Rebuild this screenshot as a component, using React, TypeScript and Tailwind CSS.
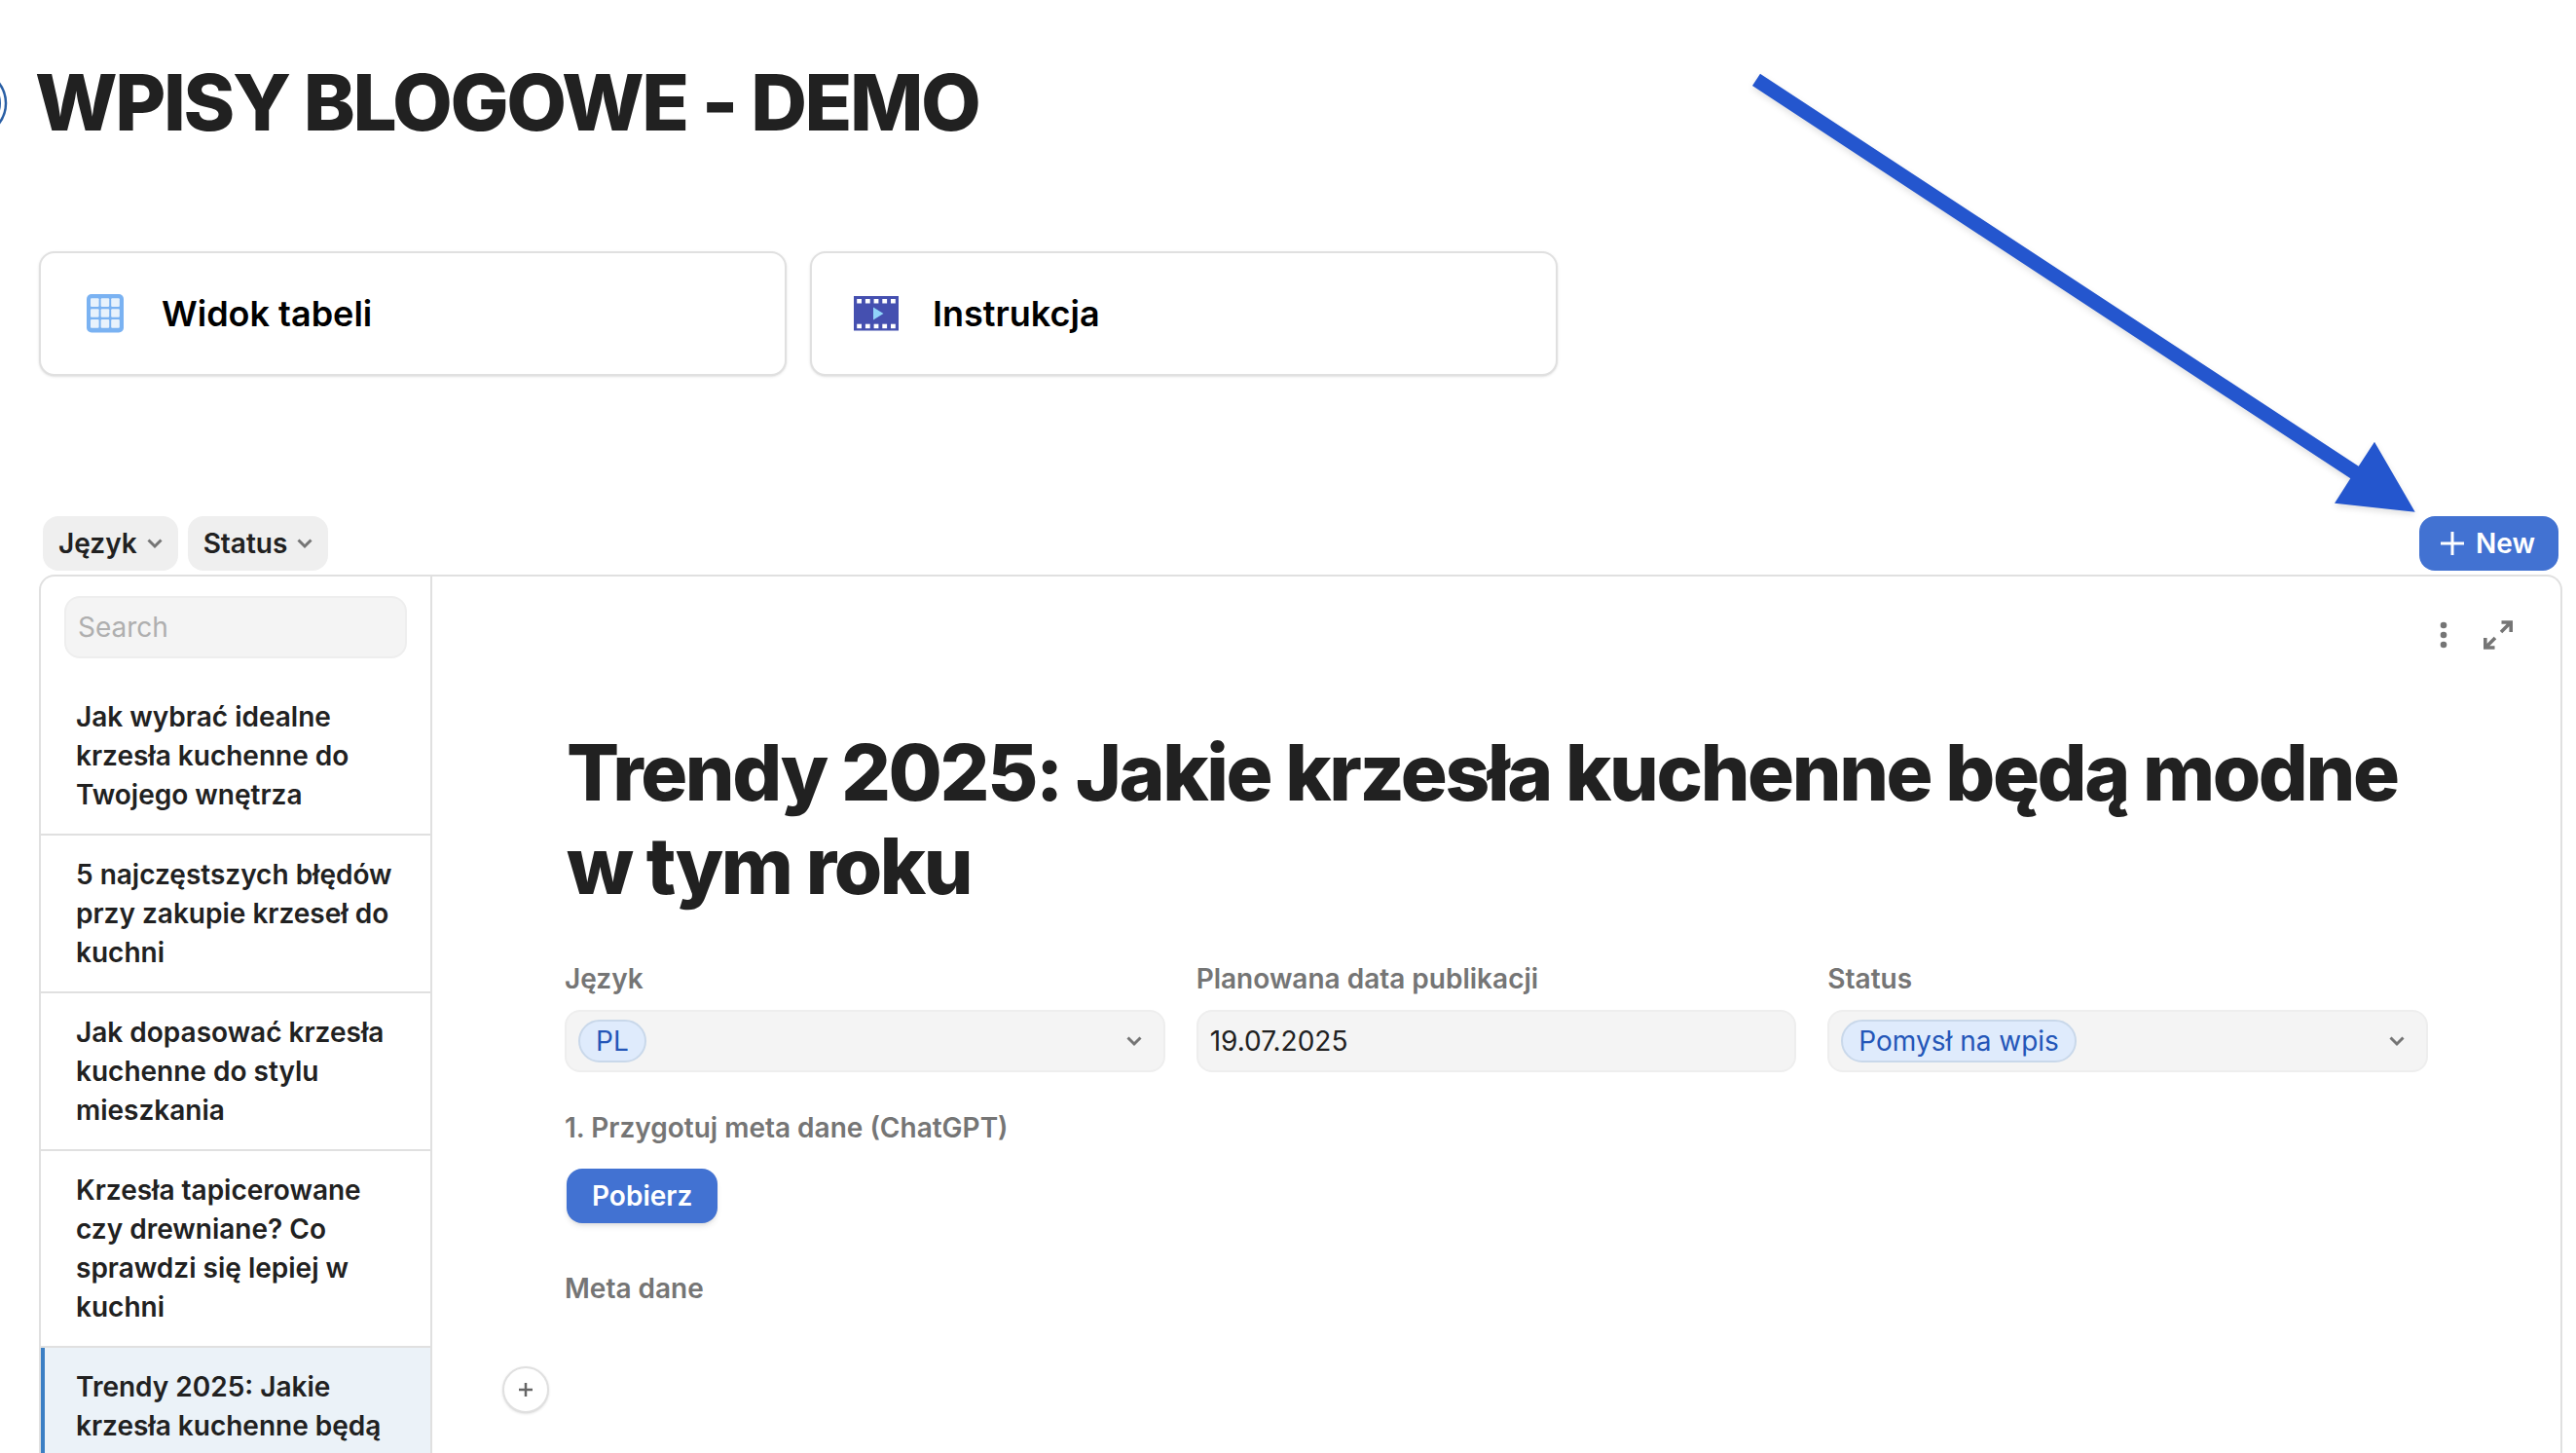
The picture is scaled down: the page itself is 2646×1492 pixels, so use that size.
import type { ReactNode } from 'react';

const posts = [
  'Jak wybrać idealne krzesła kuchenne do Twojego wnętrza',
  '5 najczęstszych błędów przy zakupie krzeseł do kuchni',
  'Jak dopasować krzesła kuchenne do stylu mieszkania',
  'Krzesła tapicerowane czy drewniane? Co sprawdzi się lepiej w kuchni',
  'Trendy 2025: Jakie krzesła kuchenne będą modne w tym roku',
];
const activePost = 4;

function Chevron() {
  return (
    <svg className="h-4 w-4 shrink-0" viewBox="0 0 16 16" fill="none" stroke="#757575" strokeWidth="3">
      <path d="M1.5 4.5 8 11l6.5-6.5" />
    </svg>
  );
}

function GridIcon() {
  const cells = [0, 1, 2];
  return (
    <svg className="h-12 w-12" viewBox="0 0 48 48">
      <rect x="5" y="4" width="38" height="39.5" rx="5" fill="#7ab2f2" />
      {cells.map((row) =>
        cells.map((col) => (
          <rect
            key={`${row}-${col}`}
            x={9 + col * 10.6}
            y={8.3 + row * 10.9}
            width="8.6"
            height="8.6"
            rx="1"
            fill="#e8f2fc"
          />
        ))
      )}
    </svg>
  );
}

function FilmIcon() {
  const holes = [0, 1, 2, 3, 4];
  return (
    <svg className="h-12 w-12" viewBox="0 0 48 48">
      <rect x="1" y="6" width="46" height="35.5" fill="#4550b0" />
      {holes.map((i) => (
        <g key={i} fill="#fff">
          <rect x={4.2 + i * 8.7} y="9" width="4.8" height="4.5" />
          <rect x={4.2 + i * 8.7} y="34.7" width="4.8" height="4.5" />
        </g>
      ))}
      <path d="M21 17.5v13L31.5 24z" fill="#90d5fa" />
    </svg>
  );
}

function LinkCard({ icon, label }: { icon: ReactNode; label: string }) {
  return (
    <a
      href="#"
      className="flex h-32 w-3xl items-center gap-[34px] rounded-2xl border-2 border-[#e0e0e0] bg-white px-[42px] text-4xl font-semibold text-black shadow-sm"
    >
      {icon}
      {label}
    </a>
  );
}

function FilterButton({ label }: { label: string }) {
  return (
    <button type="button" className="flex h-14 items-center gap-[10px] rounded-2xl bg-[#efefef] px-4 font-semibold">
      {label}
      <Chevron />
    </button>
  );
}

function SelectField({ id, label, options }: { id: string; label: string; options: string[] }) {
  return (
    <div>
      <label htmlFor={id} className="font-semibold text-[#757575]">
        {label}
      </label>
      <div className="mt-3 flex h-16 items-center justify-between rounded-2xl border-2 border-[#eeeeee] bg-[#f4f4f4] pr-[22px] pl-3">
        <select
          id={id}
          className="field-sizing-content h-11 appearance-none rounded-full border-2 border-[#c9d8ea] bg-[#dfebfc] px-4 leading-10 text-[#2456b8]"
        >
          {options.map((option) => (
            <option key={option}>{option}</option>
          ))}
        </select>
        <Chevron />
      </div>
    </div>
  );
}

export default function App() {
  return (
    <div className="relative flex h-screen flex-col overflow-hidden bg-white font-[Inter,sans-serif] text-[28px] leading-10 text-[#212121]">
      <header className="flex items-center pt-[57px]">
        <svg className="h-24 w-2 shrink-0" viewBox="0 0 8 96" fill="none" stroke="#2a5fa5">
          <circle cx="-28" cy="49" r="34" strokeWidth="2.5" />
          <circle cx="-28" cy="49" r="28" strokeWidth="2" />
        </svg>
        <h1 className="ml-7 text-[80px] leading-24 font-extrabold tracking-[-0.03em]">WPISY BLOGOWE - DEMO</h1>
      </header>

      <nav className="mt-[105px] ml-10 flex gap-6">
        <LinkCard icon={<GridIcon />} label="Widok tabeli" />
        <LinkCard icon={<FilmIcon />} label="Instrukcja" />
      </nav>

      <div className="mt-36 mr-[18px] ml-11 flex items-center gap-[10px]">
        <FilterButton label="Język" />
        <FilterButton label="Status" />
        <button
          type="button"
          className="ml-auto flex h-14 items-center gap-3 rounded-2xl bg-[#4272d2] pr-6 pl-[22px] font-semibold text-white"
        >
          <svg className="h-6 w-6" viewBox="0 0 24 24" stroke="currentColor" strokeWidth="3">
            <path d="M12 0v24M0 12h24" />
          </svg>
          New
        </button>
      </div>

      <div className="mt-1 mr-[14px] ml-10 flex min-h-0 flex-1 rounded-t-2xl border-2 border-b-0 border-[#e0e0e0]">
        <aside className="w-[402px] shrink-0 overflow-hidden border-r-2 border-[#e0e0e0]">
          <div className="px-6 py-5">
            <input
              type="search"
              aria-label="Search"
              placeholder="Search"
              className="h-16 w-full rounded-2xl border-2 border-[#eeeeee] bg-[#f4f4f4] px-3 placeholder:text-[#afafaf]"
            />
          </div>
          <ul>
            {posts.map((post, i) => (
              <li key={post} className="border-b-2 border-[#e0e0e0]">
                <button
                  type="button"
                  className={
                    i === activePost
                      ? 'block w-full border-l-4 border-[#3b7fc4] bg-[#ebf2f8] py-5 pr-9 pl-8 text-left font-semibold'
                      : 'block w-full px-9 py-5 text-left font-semibold'
                  }
                >
                  {post}
                </button>
              </li>
            ))}
          </ul>
        </aside>

        <main className="min-w-0 flex-1 px-[136px]">
          <div className="-mr-[88px] flex h-[153px] items-start justify-end gap-6 pt-11">
            <button type="button" aria-label="More">
              <svg className="h-8 w-8" viewBox="0 0 32 32" fill="#757575">
                <circle cx="16" cy="6" r="3.3" />
                <circle cx="16" cy="16" r="3.3" />
                <circle cx="16" cy="26" r="3.3" />
              </svg>
            </button>
            <button type="button" aria-label="Expand">
              <svg className="h-8 w-8" viewBox="0 0 32 32" fill="none" stroke="#757575" strokeWidth="3.6">
                <path d="M19.500 3H31M29.200 1.200V13M29 3 19 13M12.500 29H1M2.800 30.800V19M3 29l10-10" />
              </svg>
            </button>
          </div>

          <h2 className="ml-[2px] text-[80px] leading-24 font-extrabold tracking-[-0.03em]">
            Trendy 2025: Jakie krzesła kuchenne będą modne w tym roku
          </h2>

          <div className="mt-12 grid grid-cols-3 gap-8">
            <SelectField id="lang" label="Język" options={['PL']} />
            <div>
              <label htmlFor="date" className="font-semibold text-[#757575]">
                Planowana data publikacji
              </label>
              <input
                id="date"
                defaultValue="19.07.2025"
                className="mt-3 h-16 w-full rounded-2xl border-2 border-[#eeeeee] bg-[#f4f4f4] px-3"
              />
            </div>
            <SelectField id="status" label="Status" options={['Pomysł na wpis']} />
          </div>

          <p className="mt-[37px] font-semibold text-[#757575]">1. Przygotuj meta dane (ChatGPT)</p>
          <button
            type="button"
            className="mt-[22px] ml-[2px] block h-14 rounded-2xl bg-[#4272d2] px-[26px] font-semibold text-white shadow-md"
          >
            Pobierz
          </button>
          <p className="mt-[47px] font-semibold text-[#757575]">Meta dane</p>

          <button
            type="button"
            aria-label="Add"
            className="mt-[60px] -ml-16 flex h-12 w-12 items-center justify-center rounded-full border-2 border-[#e0e0e0] bg-white shadow-sm"
          >
            <svg className="h-4 w-4" viewBox="0 0 16 16" stroke="#666" strokeWidth="2.5">
              <path d="M8 1v14M1 8h14" />
            </svg>
          </button>
        </main>
      </div>

      {/* pointer to the "New" button */}
      <svg
        className="pointer-events-none absolute top-[60px] right-[156px] h-[480px] w-[700px] drop-shadow-md"
        viewBox="0 0 700 480"
        fill="#2456ce"
      >
        <path d="M18 15.7 632.7 418.7 649 393.7 690.7 465.7 608 456.7 624.3 431.3 10 28z" />
      </svg>
    </div>
  );
}
